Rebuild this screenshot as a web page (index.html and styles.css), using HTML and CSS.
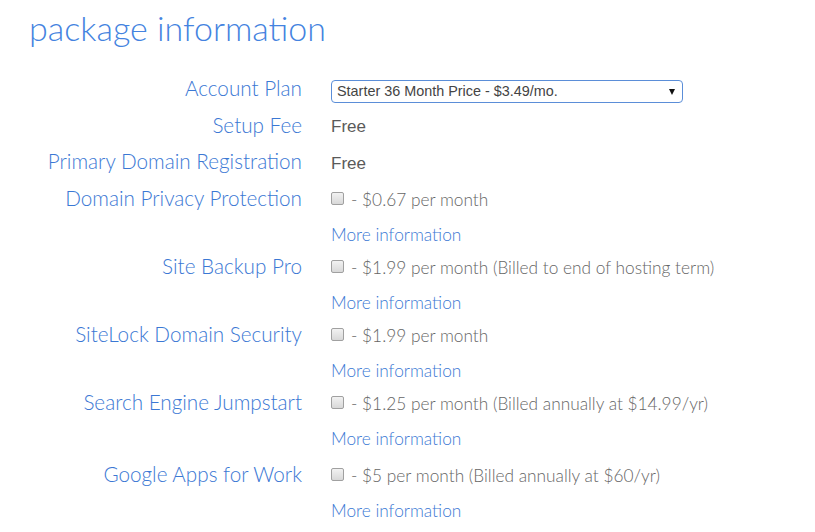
FILE: index.html
```html
<!DOCTYPE html>
<html>
<head>
<meta charset="utf-8">
<link rel="stylesheet" href="styles.css">
</head>
<body>
<div class="page">
  <h1 class="title">package information</h1>
  <div class="form">
    <div class="row">
      <div class="label">Account Plan</div>
      <div class="value">
        <div class="select"><span class="select-text">Starter 36 Month Price - $3.49/mo.</span><span class="arrow"></span></div>
      </div>
    </div>
    <div class="row row-tall">
      <div class="label">Setup Fee</div>
      <div class="value plain">Free</div>
    </div>
    <div class="row">
      <div class="label">Primary Domain Registration</div>
      <div class="value plain">Free</div>
    </div>
    <div class="row row-tall">
      <div class="label">Domain Privacy Protection</div>
      <div class="value"><span class="check"></span><span class="price">- $0.67 per month</span></div>
    </div>
    <div class="row more">
      <div class="label"></div>
      <div class="value"><a class="link">More information</a></div>
    </div>
    <div class="row">
      <div class="label">Site Backup Pro</div>
      <div class="value"><span class="check"></span><span class="price">- $1.99 per month (Billed to end of hosting term)</span></div>
    </div>
    <div class="row more">
      <div class="label"></div>
      <div class="value"><a class="link">More information</a></div>
    </div>
    <div class="row">
      <div class="label">SiteLock Domain Security</div>
      <div class="value"><span class="check"></span><span class="price">- $1.99 per month</span></div>
    </div>
    <div class="row more">
      <div class="label"></div>
      <div class="value"><a class="link">More information</a></div>
    </div>
    <div class="row">
      <div class="label">Search Engine Jumpstart</div>
      <div class="value"><span class="check"></span><span class="price">- $1.25 per month (Billed annually at $14.99/yr)</span></div>
    </div>
    <div class="row more">
      <div class="label"></div>
      <div class="value"><a class="link">More information</a></div>
    </div>
    <div class="row row-gap">
      <div class="label">Google Apps for Work</div>
      <div class="value"><span class="check"></span><span class="price">- $5 per month (Billed annually at $60/yr)</span></div>
    </div>
    <div class="row more">
      <div class="label"></div>
      <div class="value"><a class="link">More information</a></div>
    </div>
  </div>
</div>
</body>
</html>
```

FILE: styles.css
```css
html, body {
  margin: 0;
  padding: 0;
  background: #ffffff;
}

.page {
  padding: 0 0 0 8px;
  font-family: Lato, "Open Sans", sans-serif;
  font-weight: 300;
}

.title {
  margin: 0;
  padding: 10px 0 0 21px;
  height: 70px;
  box-sizing: border-box;
  font-size: 34px;
  font-weight: 300;
  line-height: 36px;
  color: #4483e0;
}

.form {
  display: flex;
  flex-direction: column;
}

.row {
  display: flex;
  align-items: center;
  height: 36px;
  column-gap: 29px;
}

.row-tall {
  height: 37px;
}

.row-gap {
  margin-top: 4px;
}

.row.more {
  height: 32px;
  align-items: flex-start;
}

.row.more .value {
  line-height: 38px;
}

.label {
  width: 294px;
  flex: none;
  text-align: right;
  font-size: 20.7px;
  color: #3b78d4;
  white-space: nowrap;
}

.value {
  display: flex;
  align-items: center;
  font-size: 17.3px;
  color: #666666;
  white-space: nowrap;
}

.price {
  padding-top: 3px;
}

.plain {
  font-family: "Liberation Sans", Arial, sans-serif;
  font-weight: 400;
  font-size: 17px;
  color: #5a5a5a;
  padding-top: 5px;
}

.select {
  position: relative;
  width: 350px;
  height: 21px;
  margin-top: 7px;
  border: 1px solid #5b8ed8;
  border-radius: 4px;
  font-family: "Liberation Sans", Arial, sans-serif;
  font-weight: 400;
  font-size: 14.4px;
  line-height: 21px;
  color: #444444;
  box-sizing: content-box;
}

.select-text {
  padding-left: 5px;
}

.arrow {
  position: absolute;
  right: 7px;
  top: 8px;
  width: 0;
  height: 0;
  border-left: 3px solid transparent;
  border-right: 3px solid transparent;
  border-top: 6px solid #111111;
}

.check {
  width: 11px;
  height: 11px;
  border: 1px solid #a0a0a0;
  border-radius: 2px;
  background: linear-gradient(#f2f2f2, #d8d8d8);
  margin-right: 7px;
  margin-top: 1px;
  flex: none;
}

.link {
  font-size: 17.3px;
  color: #3b78d4;
  text-decoration: none;
}
```
